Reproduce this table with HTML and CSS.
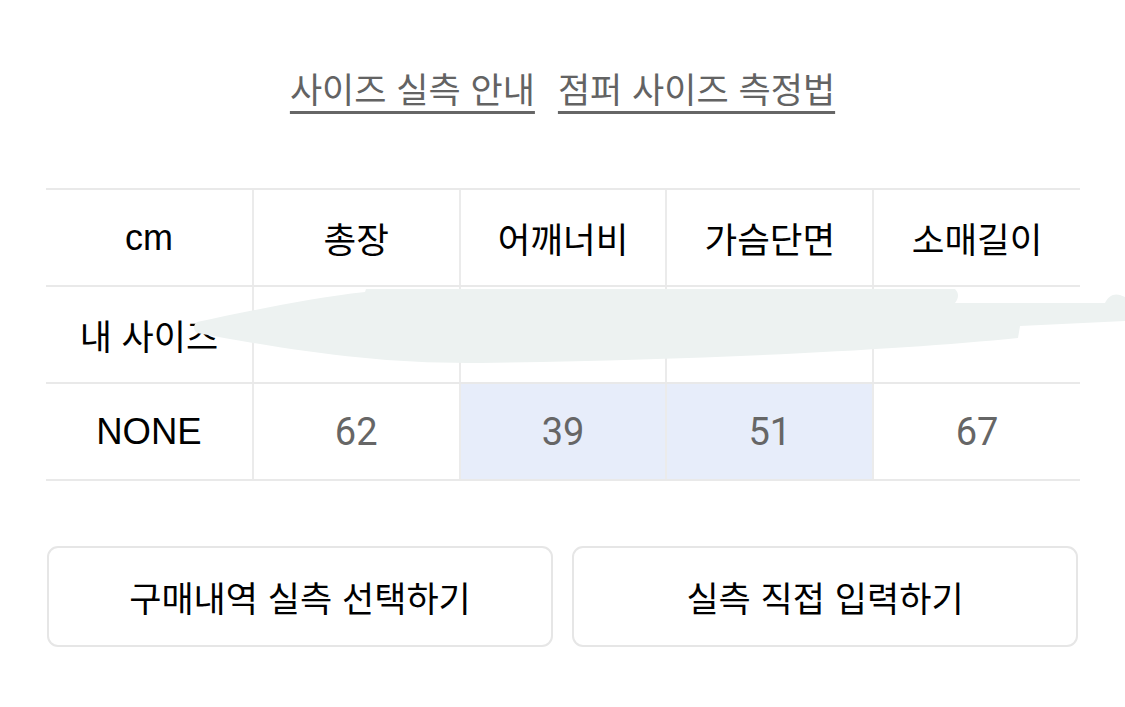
FILE: index.html
```html
<!DOCTYPE html>
<html lang="ko">
<head>
<meta charset="utf-8">
<link rel="stylesheet" href="styles.css">
</head>
<body>
<div class="page">
  <nav class="links">
    <a class="link" href="#">사이즈 실측 안내</a>
    <a class="link" href="#">점퍼 사이즈 측정법</a>
  </nav>

  <table class="size-table">
    <tr class="row head">
      <th class="label">cm</th>
      <th>총장</th>
      <th>어깨너비</th>
      <th>가슴단면</th>
      <th>소매길이</th>
    </tr>
    <tr class="row mine">
      <td class="label">내 사이즈</td>
      <td class="val"></td>
      <td class="val"></td>
      <td class="val"></td>
      <td class="val"></td>
    </tr>
    <tr class="row">
      <td class="label">NONE</td>
      <td class="val">62</td>
      <td class="val hl">39</td>
      <td class="val hl">51</td>
      <td class="val">67</td>
    </tr>
  </table>

  <div class="actions">
    <button class="btn">구매내역 실측 선택하기</button>
    <button class="btn">실측 직접 입력하기</button>
  </div>

  <svg class="smear" width="1125" height="707" viewBox="0 0 1125 707" aria-hidden="true">
    <path d="M197,322 C250,311 310,298 365,292 L366,289 L955,289 C960,294 958,299 955,303 L1105,303 C1108,296 1114,293 1120,295 L1125,297 L1125,321 L1020,326 L1018,338 C900,350 700,360 480,363 C380,364 300,352 197,333 C193,330 193,325 197,322 Z" fill="#edf2f1"/>
  </svg>
</div>
</body>
</html>
```

FILE: styles.css
```css
* { box-sizing: border-box; }

html, body {
  margin: 0;
  padding: 0;
  background: #ffffff;
}

body {
  font-family: "Noto Sans CJK KR", "Noto Sans", sans-serif;
  color: #000;
}

.page {
  position: relative;
  width: 1125px;
  height: 707px;
  overflow: hidden;
}

.links {
  display: flex;
  justify-content: center;
  gap: 23px;
  padding-top: 64px;
  height: 120px;
}

.link {
  font-size: 35px;
  line-height: 48px;
  color: #636363;
  text-decoration: underline;
  text-decoration-thickness: 3px;
  text-underline-offset: 8px;
  text-decoration-color: #666;
}

.size-table {
  margin: 68px 0 0 46px;
  width: 1034px;
  border-collapse: collapse;
  table-layout: fixed;
}

.row th,
.row td {
  height: 97px;
  border-top: 2px solid #e9e9e9;
  border-bottom: 2px solid #e9e9e9;
  border-left: 2px solid #ebebeb;
  text-align: center;
  vertical-align: middle;
  padding: 0;
}

.row th:first-child,
.row td:first-child {
  border-left: none;
}

.row th {
  font-family: "Liberation Sans", "Noto Sans CJK KR", sans-serif;
  font-weight: 400;
  font-size: 35.5px;
  color: #000;
}

.row th.label {
  font-size: 36px;
}

.row td.label {
  font-family: "Liberation Sans", "Noto Sans CJK KR", sans-serif;
  font-size: 35px;
  color: #000;
}

.row:last-child td.label {
  font-size: 36.5px;
}

.row td.val {
  font-family: Roboto, "Liberation Sans", sans-serif;
  font-size: 38px;
  color: #666;
}

.row td.hl {
  background: #e7edfa;
}

.actions {
  display: flex;
  gap: 19px;
  margin: 65px 0 0 47px;
  width: 1031px;
}

.btn {
  flex: 1;
  height: 101px;
  background: #fff;
  border: 2px solid #e6e6e6;
  border-radius: 11px;
  font-family: "Noto Sans CJK KR", sans-serif;
  font-size: 35px;
  font-weight: 400;
  color: #000;
  padding: 0;
}

.smear {
  position: absolute;
  left: 0;
  top: 0;
  pointer-events: none;
}
```
